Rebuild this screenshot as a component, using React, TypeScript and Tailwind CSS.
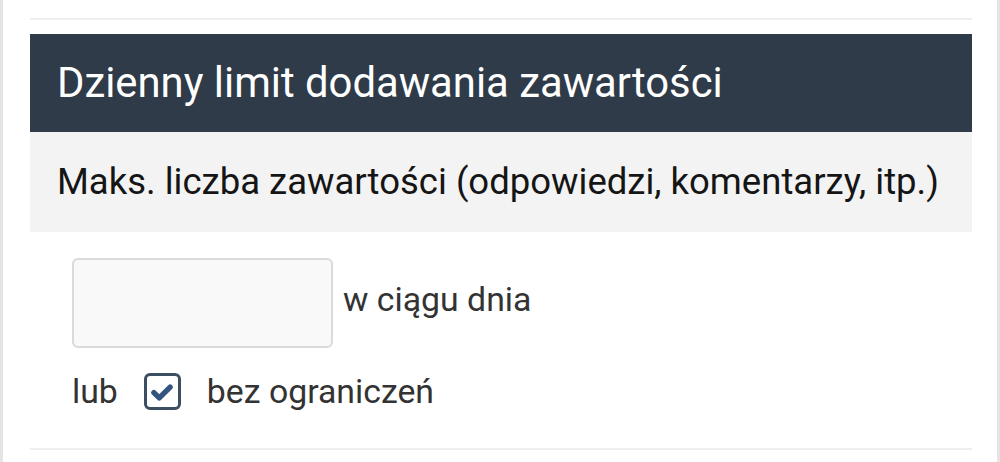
export default function App() {
  return (
    <div className="h-[462px] w-[1000px] overflow-hidden bg-white border-l-[3px] border-r-[3px] border-[#e4e4e4] font-['Roboto',sans-serif]">
      <div className="ml-[27px] mr-[25px] pt-[18px]">
        <div className="h-[2px] bg-[#eeeeee]" />
        <div className="mt-[14px] h-[98px] bg-[#2f3b48] flex items-center pl-[27px]">
          <h1 className="text-[41.8px] leading-none text-white">Dzienny limit dodawania zawartości</h1>
        </div>
        <div className="h-[100px] bg-[#f3f3f3] flex items-center pl-[27px]">
          <p className="text-[36.5px] leading-none text-[#151515]">Maks. liczba zawartości (odpowiedzi, komentarzy, itp.)</p>
        </div>
        <div className="pl-[42px] pt-[26px]">
          <div className="flex items-center">
            <input
              type="text"
              className="w-[261px] h-[90px] rounded-[6px] border-2 border-[#dadada] bg-[#f9f9f9] outline-none"
            />
            <span className="ml-[10px] -mt-[6px] text-[33.8px] leading-none text-[#333333]">w ciągu dnia</span>
          </div>
          <div className="mt-[25px] flex items-center">
            <span className="text-[33.8px] leading-none text-[#333333]">lub</span>
            <span className="ml-[26px] w-[37px] h-[37px] rounded-[6px] border-[3px] border-[#3c4e62] flex items-center justify-center">
              <svg viewBox="0 0 24 24" className="w-[26px] h-[26px]">
                <path d="M4.5 12.5l5 5L19.5 7.5" fill="none" stroke="#34547f" strokeWidth="5" strokeLinecap="round" strokeLinejoin="round" />
              </svg>
            </span>
            <span className="ml-[26px] text-[33.8px] leading-none text-[#333333]">bez ograniczeń</span>
          </div>
        </div>
        <div className="mt-[38px] h-[2px] bg-[#eeeeee]" />
      </div>
    </div>
  );
}
